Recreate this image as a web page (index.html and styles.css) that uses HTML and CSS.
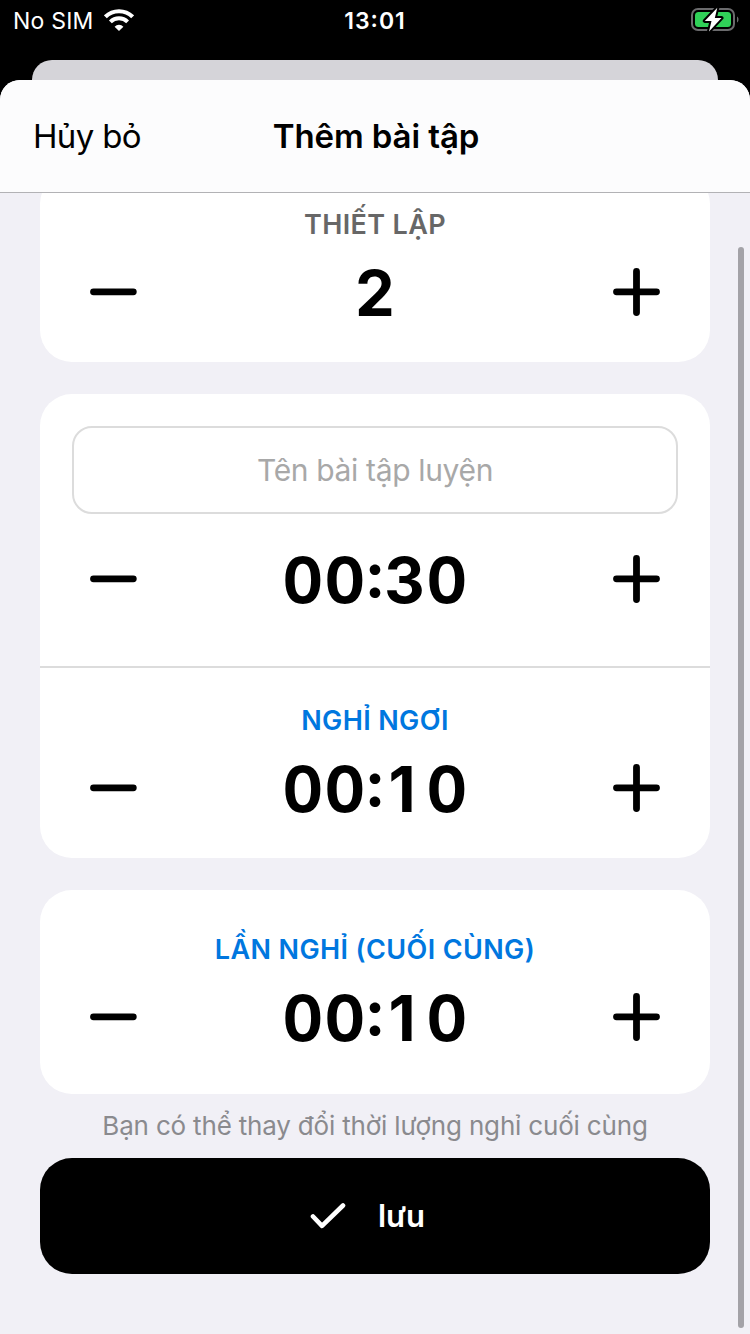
FILE: index.html
```html
<!DOCTYPE html>
<html lang="vi">
<head>
<meta charset="utf-8">
<title>Thêm bài tập</title>
<link rel="stylesheet" href="styles.css">
</head>
<body>
<svg class="defs" width="0" height="0" aria-hidden="true">
  <symbol id="minus" viewBox="0 0 48 48"><path d="M3.5 23.800H43.300" fill="none" stroke="#000" stroke-width="6.800" stroke-linecap="round"/></symbol>
  <symbol id="plus" viewBox="0 0 48 48"><path d="M3.500 23.800H43.500M23.500 3.500V44.500" fill="none" stroke="#000" stroke-width="6.800" stroke-linecap="round"/></symbol>
</svg>
<header class="status">
  <div class="carrier"><span class="carrier-name">No SIM</span>
    <svg class="wifi" width="30" height="22" viewBox="0 0 30 22"><g fill="none" stroke="#fff" stroke-width="4"><path d="M1.4 7.8A19.2 19.2 0 0 1 28.6 7.8"/><path d="M6.4 12.9A12.2 12.2 0 0 1 23.6 12.9"/></g><path d="M15 22L10.6 17.7A6.2 6.2 0 0 1 19.4 17.7Z" fill="#fff"/></svg>
  </div>
  <div class="clock">13<span class="clock-colon">:</span>01</div>
  <div class="power">
    <svg width="48" height="26" viewBox="0 0 48 26"><rect x="1" y="2" width="42" height="21" rx="6" fill="none" stroke="#6b6b6d" stroke-width="2"/><path d="M46 9.5C48 10.500 48 14.500 46 15.500Z" fill="#6b6b6d"/><rect x="4" y="5" width="36" height="15" rx="3.500" fill="#30d158"/><path d="M26.300 .8L13.800 13.900H20.500L18 24.400L30.500 11H23.800Z" fill="#fff" stroke="#000" stroke-width="4" stroke-linejoin="round" paint-order="stroke"/></svg>
  </div>
</header>
<div class="peek"></div>
<main class="sheet">
  <nav class="nav"><span class="cancel">Hủy bỏ</span><h1 class="title">Thêm bài tập</h1><span></span></nav>
  <div class="content">
    <section class="card card-sets">
      <h2 class="label muted">THIẾT LẬP</h2>
      <div class="stepper"><svg class="icon"><use href="#minus"/></svg><span class="value">2</span><svg class="icon"><use href="#plus"/></svg></div>
    </section>
    <section class="card card-work">
      <div class="field"><span class="placeholder">Tên bài tập luyện</span></div>
      <div class="stepper"><svg class="icon"><use href="#minus"/></svg><span class="value">00<span class="colon">:</span>30</span><svg class="icon"><use href="#plus"/></svg></div>
      <div class="rest">
        <h2 class="label">NGHỈ NGƠI</h2>
        <div class="stepper"><svg class="icon"><use href="#minus"/></svg><span class="value">00<span class="colon">:</span><span class="one">1</span>0</span><svg class="icon"><use href="#plus"/></svg></div>
      </div>
    </section>
    <section class="card card-last">
      <h2 class="label">LẦN NGHỈ (CUỐI CÙNG)</h2>
      <div class="stepper"><svg class="icon"><use href="#minus"/></svg><span class="value">00<span class="colon">:</span><span class="one">1</span>0</span><svg class="icon"><use href="#plus"/></svg></div>
    </section>
    <p class="hint">Bạn có thể thay đổi thời lượng nghỉ cuối cùng</p>
    <div class="save"><svg width="36" height="28" viewBox="0 0 36 28"><path d="M3 14.500L12 23.800L33 3.500" fill="none" stroke="#fff" stroke-width="4.600" stroke-linecap="round" stroke-linejoin="round"/></svg><span class="save-text">lưu</span></div>
  </div>
  <div class="scrollbar"></div>
</main>
</body>
</html>
```
FILE: styles.css
```css
* { box-sizing: border-box; }
body {
  margin: 0;
  width: 750px;
  height: 1334px;
  overflow: hidden;
  display: flex;
  flex-direction: column;
  background: #000;
  color: #000;
  font-family: Inter, "Noto Sans", sans-serif;
  white-space: nowrap;
}
h1, h2, p { margin: 0; }
svg { display: block; flex: none; }
.defs { position: absolute; }

.status {
  height: 60px;
  flex: none;
  padding: 0 11px 20px 13px;
  display: grid;
  grid-template-columns: 1fr auto 1fr;
  align-items: center;
  color: #fff;
  font-size: 23px;
}
.carrier { display: flex; align-items: center; gap: 10px; }
.carrier-name { letter-spacing: 0.2px; padding-top: 1px; }
.clock { font-weight: 600; letter-spacing: 1px; padding-top: 1px; margin-right: 2px; }
.clock-colon { vertical-align: 2px; line-height: 0; }
.power { display: flex; justify-content: flex-end; }

.peek {
  height: 20px;
  flex: none;
  margin: 0 32px;
  background: #d5d4d9;
  border-radius: 20px 20px 0 0;
}
.sheet {
  position: relative;
  flex: 1;
  min-height: 0;
  display: flex;
  flex-direction: column;
  overflow: hidden;
  background: #f1f0f6;
  border-radius: 20px 20px 0 0;
}
.nav {
  height: 113px;
  flex: none;
  padding: 0 31px 0 33px;
  display: grid;
  grid-template-columns: 1fr auto 1fr;
  align-items: center;
  background: #fcfcfd;
  border-bottom: 1px solid #b2b2b5;
  font-size: 33px;
}
.cancel { letter-spacing: -0.65px; }
.title { font-size: 33px; font-weight: 600; letter-spacing: -0.1px; }

.content {
  flex: 1;
  min-height: 0;
  overflow: hidden;
  padding: 0 40px;
}
.card { background: #fff; border-radius: 32px; margin-bottom: 32px; }
.card-sets { margin-top: -21px; height: 190px; padding-top: 37px; }
.card-work { height: 464px; padding-top: 32px; }
.card-last { height: 204px; padding-top: 44px; margin-bottom: 0; }

.label {
  height: 32px;
  line-height: 32px;
  text-align: center;
  font-size: 27px;
  font-weight: 600;
  letter-spacing: 0.38px;
  color: #0077df;
}
.muted { color: #676767; }

.stepper {
  height: 80px;
  margin-top: 11px;
  padding: 0 49px 0 50px;
  display: grid;
  grid-template-columns: 48px 1fr 48px;
  align-items: center;
}
.icon { width: 48px; height: 48px; }
.value {
  height: 80px;
  padding-top: 2px;
  text-align: center;
  font-size: 63px;
  line-height: 78px;
  font-weight: 700;
  letter-spacing: 1.2px;
  font-variant-numeric: tabular-nums;
}
.colon { vertical-align: 6px; line-height: 0; }
.one {
  display: inline-block;
  width: 42px;
  padding-left: 4px;
  text-align: left;
  font-variant-numeric: normal;
}
.field {
  height: 88px;
  margin: 0 32px;
  display: flex;
  align-items: center;
  justify-content: center;
  border: 2px solid #dcdcdc;
  border-radius: 20px;
  color: #a8a8a8;
  font-size: 30px;
  letter-spacing: -0.35px;
}
.card-work > .stepper { margin-top: 25px; }
.rest { margin-top: 47px; border-top: 2px solid #dcdcdc; padding-top: 37px; }

.hint {
  height: 64px;
  line-height: 64px;
  text-align: center;
  color: #8a8a8e;
  font-size: 26px;
  letter-spacing: -0.18px;
}
.save {
  height: 116px;
  display: flex;
  align-items: center;
  justify-content: center;
  gap: 32px;
  padding-right: 15px;
  background: #000;
  border-radius: 32px;
  color: #fff;
  font-size: 31px;
  font-weight: 600;
}
.save-text { padding-bottom: 2px; }
.scrollbar {
  position: absolute;
  right: 6px;
  top: 167px;
  width: 6px;
  height: 1081px;
  border-radius: 3px;
  background: #a3a2a7;
}
```
